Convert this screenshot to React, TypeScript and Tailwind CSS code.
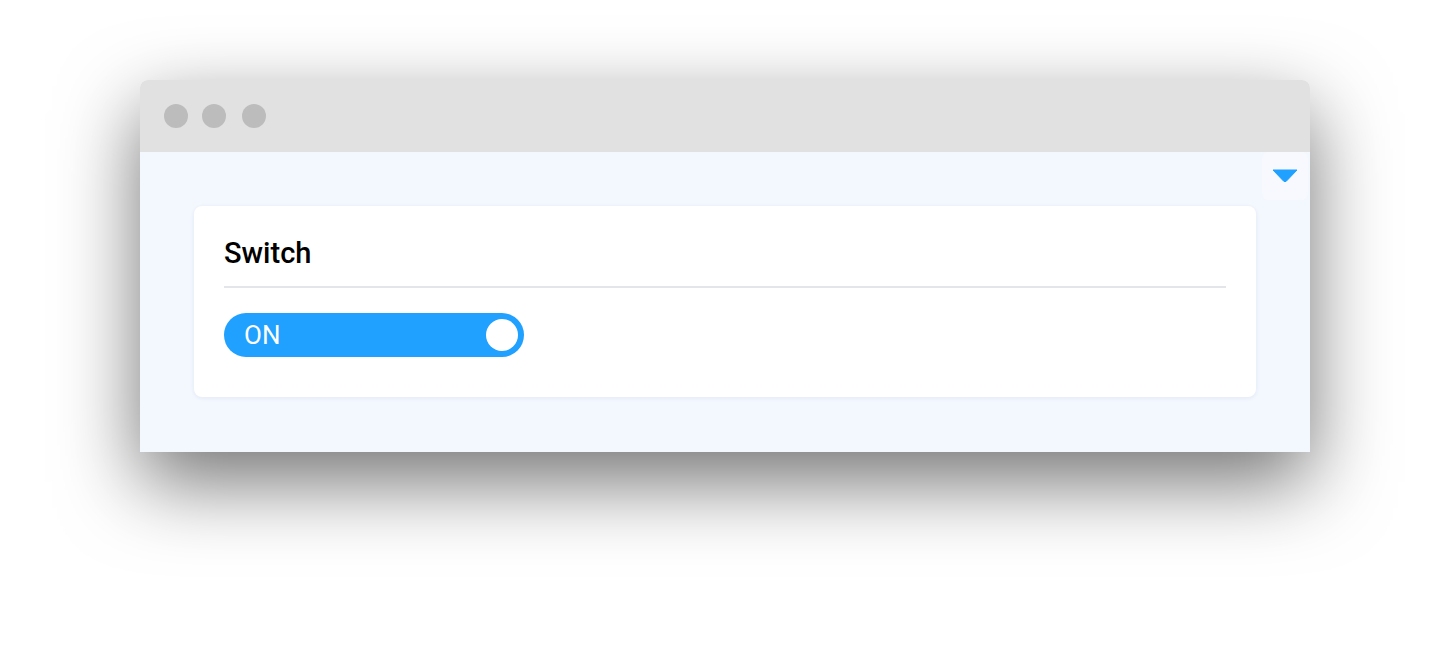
export default function App() {
  return (
    <div className="w-[1450px] h-[652px] bg-white pt-[80px] px-[140px]" style={{ fontFamily: "Roboto, 'Noto Sans', sans-serif" }}>
      <div className="w-[1170px] rounded-t-[8px] shadow-[0_30px_80px_rgba(0,0,0,0.55)]">
        <div className="h-[72px] bg-[#e1e1e1] rounded-t-[8px] flex items-center pl-[24px]">
          <div className="w-[24px] h-[24px] rounded-full bg-[#bcbcbc]" />
          <div className="w-[24px] h-[24px] rounded-full bg-[#bcbcbc] ml-[14px]" />
          <div className="w-[24px] h-[24px] rounded-full bg-[#bcbcbc] ml-[16px]" />
        </div>
        <div className="h-[300px] bg-[#f3f7fe] relative pt-[54px] px-[54px]">
          <div className="absolute right-[2px] top-0 w-[46px] h-[48px] rounded-[6px] bg-[#f7f9fe] flex items-center justify-center">
            <svg width="28" height="16" viewBox="0 0 28 16">
              <path d="M2 2 L26 2 L15.5 13 Q14 14.5 12.5 13 Z" fill="#20a0ff" stroke="#20a0ff" strokeWidth="1" strokeLinejoin="round" />
            </svg>
          </div>
          <div className="bg-white rounded-[8px] shadow-[0_1px_4px_rgba(30,60,120,0.08)] h-[191px] px-[30px] pt-[30px]">
            <div className="text-[29px] leading-[34px] font-medium text-black">Switch</div>
            <div className="h-[2px] bg-[#e3e5e9] mt-[16px]" />
            <div className="mt-[25px] w-[300px] h-[44px] rounded-full bg-[#20a0ff] flex items-center justify-between pl-[20px] pr-[6px]">
              <span className="text-white text-[26px] leading-none">ON</span>
              <div className="w-[32px] h-[32px] rounded-full bg-white" />
            </div>
          </div>
        </div>
      </div>
    </div>
  );
}
